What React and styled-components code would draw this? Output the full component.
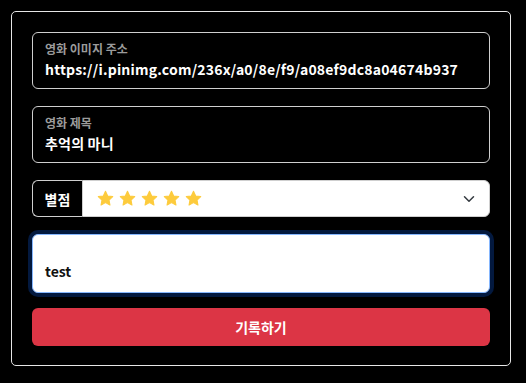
import React from "react";
import styled, { createGlobalStyle } from "styled-components";

const Global = createGlobalStyle`
  *, *::before, *::after {
    box-sizing: border-box;
  }
  body {
    margin: 0;
    background: #000;
    font-family: "Noto Sans CJK KR", "Noto Sans", sans-serif;
  }
`;

// Styles
const Page = styled.div`
  padding: 11px 15px 16px 11px;
`;

const Card = styled.form`
  border: 1px solid #e6e6e6;
  border-radius: 5px;
  padding: 20px 20px 19px 20px;
  display: flex;
  flex-direction: column;
`;

const Floating = styled.div`
  border: 1px solid #cfcfcf;
  border-radius: 6px;
  height: 57px;
  padding: 7px 12px 0 12px;
  margin-bottom: 17px;
  display: flex;
  flex-direction: column;
  overflow: hidden;

  label {
    color: #9b9b9b;
    font-size: 12px;
    font-weight: 700;
    line-height: 18px;
  }

  div {
    color: #fff;
    font-size: 14px;
    font-weight: 700;
    line-height: 22px;
    white-space: nowrap;
    overflow: hidden;
    letter-spacing: 0.2px;
  }
`;

const Group = styled.div`
  display: flex;
  height: 37px;
  margin-bottom: 16px;
`;

const Addon = styled.span`
  width: 50px;
  border: 1px solid #cfcfcf;
  border-right: none;
  border-radius: 6px 0 0 6px;
  color: #fff;
  font-size: 14px;
  font-weight: 700;
  display: flex;
  align-items: center;
  justify-content: center;
`;

const Select = styled.div`
  flex: 1;
  background: #fff;
  border: 1px solid #cfcfcf;
  border-radius: 0 6px 6px 0;
  display: flex;
  align-items: center;
  justify-content: space-between;
  padding: 0 14px 0 14px;
`;

const Stars = styled.div`
  display: flex;
  gap: 5px;
`;

const TextArea = styled.div`
  height: 59px;
  margin-top: 1px;
  background: #fff;
  border: 1px solid #86b7fe;
  border-radius: 6px;
  box-shadow: 0 0 0 4px #03193f;
  padding: 25px 12px 0 12px;
  margin-bottom: 15px;
  color: #111;
  font-size: 14px;
  font-weight: 700;
  line-height: 22px;
`;

const Button = styled.button`
  height: 38px;
  border: none;
  border-radius: 6px;
  background: #dc3545;
  color: #fff;
  font-family: inherit;
  font-size: 14px;
  font-weight: 700;
`;

function Star() {
  return (
    <svg width="17" height="17" viewBox="0 0 24 24">
      <path
        d="M12 1.8l3.1 6.6 7.1.9-5.2 4.9 1.3 7.1L12 17.8l-6.3 3.5 1.3-7.1L1.8 9.3l7.1-.9z"
        fill="#fdcb3c"
        stroke="#fdcb3c"
        strokeWidth="1.5"
        strokeLinejoin="round"
      />
    </svg>
  );
}

function Chevron() {
  return (
    <svg width="12" height="12" viewBox="0 0 16 16">
      <path d="M2 5l6 6 6-6" fill="none" stroke="#343a40" strokeWidth="2" strokeLinecap="round" strokeLinejoin="round" />
    </svg>
  );
}

export default function App() {
  return (
    <>
      <Global />
      <Page>
        <Card>
          <Floating>
            <label>영화 이미지 주소</label>
            <div>https://i.pinimg.com/236x/a0/8e/f9/a08ef9dc8a04674b937</div>
          </Floating>
          <Floating>
            <label>영화 제목</label>
            <div>추억의 마니</div>
          </Floating>
          <Group>
            <Addon>별점</Addon>
            <Select>
              <Stars>
                {[0, 1, 2, 3, 4].map((i) => (
                  <Star key={i} />
                ))}
              </Stars>
              <Chevron />
            </Select>
          </Group>
          <TextArea>test</TextArea>
          <Button type="button">기록하기</Button>
        </Card>
      </Page>
    </>
  );
}
